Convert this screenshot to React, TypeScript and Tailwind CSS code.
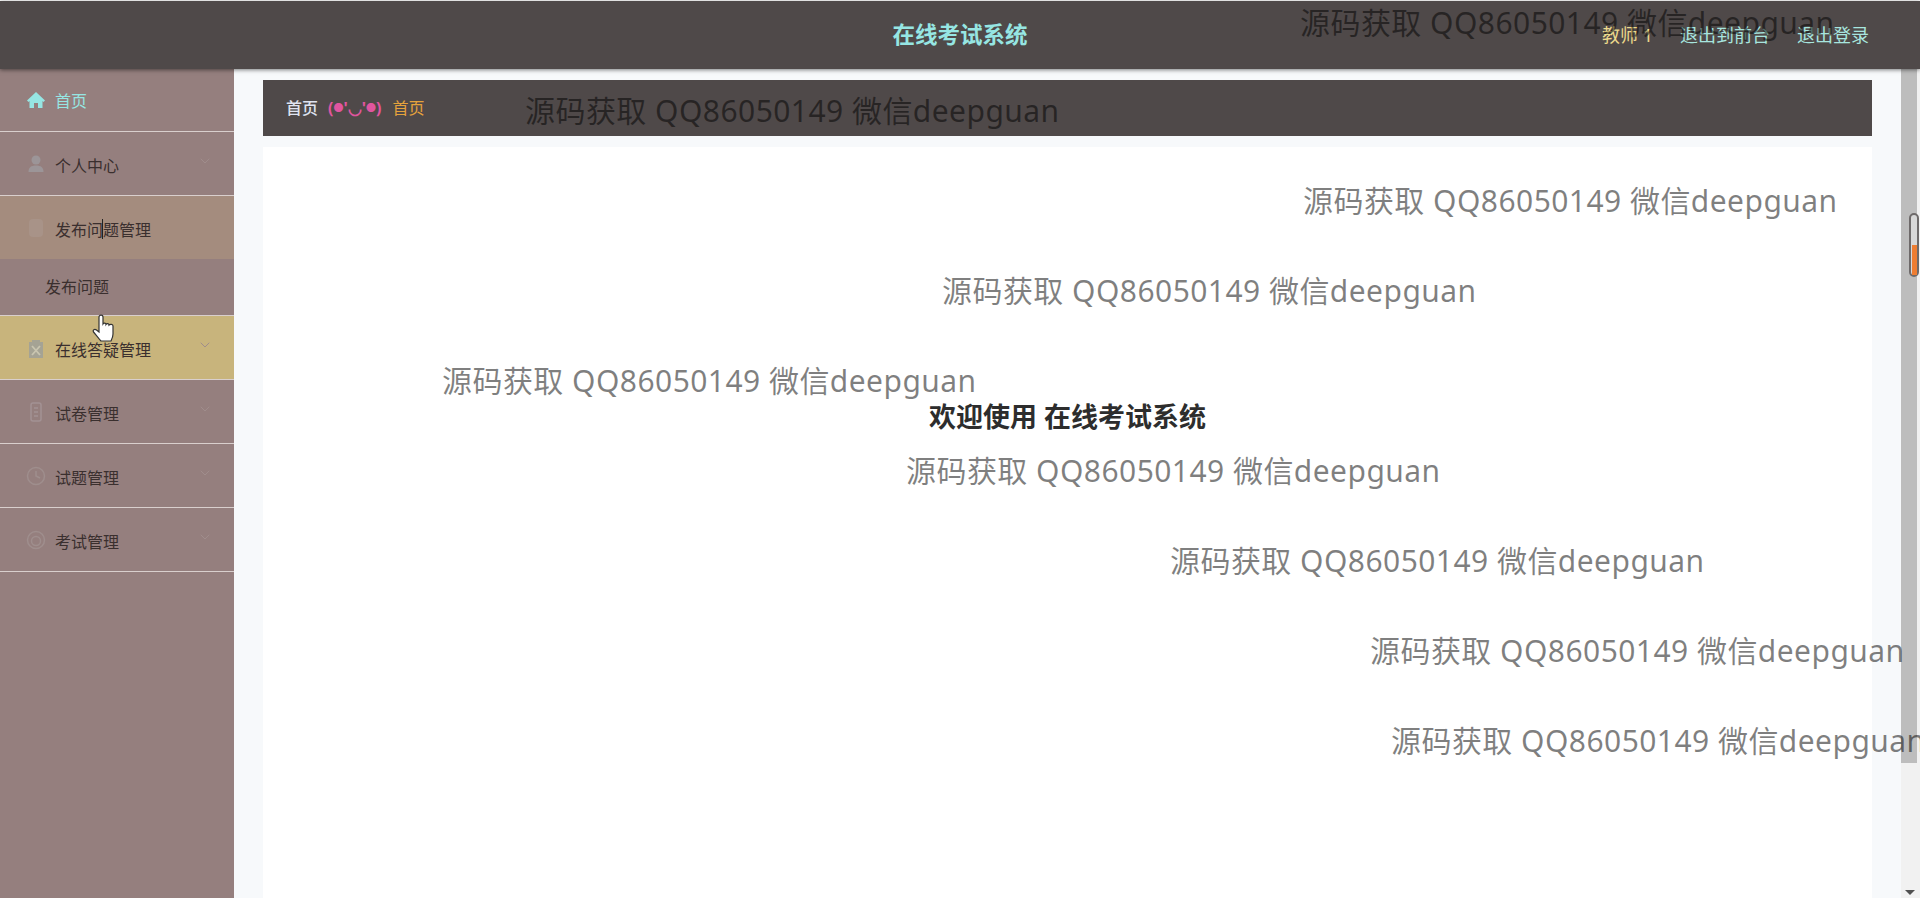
import { ChevronDown } from "lucide-react";

const font = "font-['Noto_Sans','Noto_Sans_CJK_SC',sans-serif]";

const marks = [
  { left: 1300, top: 3 },
  { left: 525, top: 91 },
  { left: 1303, top: 181 },
  { left: 942, top: 271 },
  { left: 442, top: 361 },
  { left: 906, top: 451 },
  { left: 1370, top: 631 },
  { left: 1391, top: 721 },
  { left: 1170, top: 541 },
];

const HomeIcon = () => (
  <svg viewBox="0 0 20 20" className="h-5 w-5 fill-[#96e6e3]">
    <path d="M10 2 1 10.500l1.500 1.500L3.500 11v7H8v-5h4v5h4.500v-7l1 1 1.500-1.500Z" />
  </svg>
);

const UserIcon = () => (
  <svg viewBox="0 0 20 20" className="h-5 w-5 fill-[#9c9598]">
    <circle cx="10" cy="6" r="4.500" />
    <path d="M2.500 18c0-4.500 2.500-6.500 7.500-6.500s7.500 2 7.500 6.500Z" />
  </svg>
);

const ClipboardIcon = () => (
  <svg viewBox="0 0 20 20" className="h-5 w-5">
    <path d="M3 4h3V2h8v2h3v16H3Z" fill="#a5a394" />
    <path d="m6 8 8 9m0-9-8 9" stroke="#c9c5b0" strokeWidth="1.800" />
  </svg>
);

const PhoneIcon = () => (
  <svg viewBox="0 0 20 20" className="h-5 w-5 fill-none stroke-[#a39294]" strokeWidth="1.500">
    <rect x="5" y="1" width="10" height="18" rx="2" />
    <path d="M8 6h4M8 10h4M8 14h4" />
  </svg>
);

const ClockIcon = () => (
  <svg viewBox="0 0 20 20" className="h-5 w-5 fill-none stroke-[#9f8e8d]" strokeWidth="1.500">
    <circle cx="10" cy="10" r="8.500" />
    <path d="M10 5v5l4 2" />
  </svg>
);

const RingIcon = () => (
  <svg viewBox="0 0 20 20" className="h-5 w-5 fill-none stroke-[#9f8e8d]" strokeWidth="1.500">
    <circle cx="10" cy="10" r="8.500" />
    <circle cx="10" cy="11" r="4.500" />
  </svg>
);

const Item = ({ label, icon, className = "" }: { label: string; icon?: React.ReactNode; className?: string }) => (
  <div className={`relative flex h-16 items-center border-b border-[#d9cfcd] pl-[21px] ${className}`}>
    <span className="flex w-[30px] justify-center">{icon}</span>
    <span className="ml-[4px] pt-[4px] text-base text-[#3a2f2e]">{label}</span>
    <ChevronDown className="absolute right-[21px] top-[21px] h-4 w-4 text-[#a08d8c]" strokeWidth={1.5} />
  </div>
);

export default function App() {
  return (
    <div className={`relative flex h-screen flex-col overflow-hidden ${font}`}>
      <header className="relative z-10 mt-px flex h-[68px] shrink-0 items-center bg-[#4f4949] shadow-[0_1px_4px_rgba(0,0,0,0.5)]">
        <div className="absolute inset-x-0 text-center text-[22.5px] font-bold text-[#96e6e3]">在线考试系统</div>
        <div className="ml-auto flex items-center pr-[51px] text-lg text-[#a7e5df]">
          <span className="mr-[27px] text-[#ecd98c]">教师 1</span>
          <span className="mr-[27px]">退出到前台</span>
          <span>退出登录</span>
        </div>
      </header>

      <div className="flex min-h-0 flex-1">
        <aside className="w-[234px] shrink-0 bg-[#957f7e]">
          <div className="flex h-[63px] items-center border-b border-[#d9cfcd] pl-[21px]">
            <span className="flex w-[30px] justify-center">
              <HomeIcon />
            </span>
            <span className="ml-[4px] pt-[2px] text-base text-[#96e6e3]">首页</span>
          </div>
          <Item label="个人中心" icon={<UserIcon />} />
          <div className="relative flex h-[63px] items-center bg-[#a48c7e] pl-[21px]">
            <span className="flex w-[30px] justify-center">
              <span className="h-[18px] w-[14px] rounded-sm bg-[#a89388]" />
            </span>
            <span className="ml-[4px] pt-[4px] text-base text-[#3a2f2e]">发布问题管理</span>
            <span className="absolute left-[102px] top-[23px] h-[20px] w-px bg-[#222]" />
          </div>
          <div className="flex h-[57px] items-center border-b border-[#d9cfcd] pl-[45px] text-base text-[#3a2f2e]">发布问题</div>
          <Item label="在线答疑管理" className="bg-[#c8b47c]" icon={<ClipboardIcon />} />
          <Item label="试卷管理" icon={<PhoneIcon />} />
          <Item label="试题管理" icon={<ClockIcon />} />
          <Item label="考试管理" icon={<RingIcon />} />
        </aside>

        <main className="flex min-w-0 flex-1 flex-col bg-[#f7f9fb] pl-[29px] pr-[29px] pt-[11px]">
          <div className="flex h-[56px] shrink-0 items-center bg-[#4f4949] pl-[23px] text-base">
            <span className="font-medium text-[#dfe3f0]">首页</span>
            <span className="ml-[10px] mr-[11px] flex items-center font-bold text-[#e0559f]">
              (<span className="text-[10px]">●</span>'◡'<span className="text-[10px]">●</span>)
            </span>
            <span className="text-[#e5a23c]">首页</span>
          </div>
          <div className="mt-[11px] flex flex-1 justify-center bg-white pt-[256px]">
            <h1 className="h-fit text-[27px] font-bold leading-none text-[#2d2d2d]">欢迎使用 在线考试系统</h1>
          </div>
        </main>

        {/* page scrollbar */}
        <div className="relative flex w-[19px] shrink-0 flex-col bg-[#f1f1f1]">
          <div className="h-[694px] w-[16px] bg-[#bdbdbd]" />
          <div className="absolute left-[8px] top-[144px] flex h-[64px] w-[10px] flex-col justify-end rounded-[5px] border-2 border-[#6e6a6a] bg-[#d8d8d8]">
            <div className="mx-auto h-[30px] w-[5px] bg-[#ee7d32]" />
          </div>
          <div className="absolute bottom-[3px] left-[4px] h-0 w-0 border-x-[5px] border-t-[5px] border-x-transparent border-t-[#505050]" />
        </div>
      </div>

      {/* watermark layer */}
      {marks.map((m) => (
        <div
          key={m.top}
          className="pointer-events-none absolute z-20 whitespace-nowrap text-[30px] leading-[40px] tracking-[0.45px] text-[#000000]/50"
          style={{ left: m.left, top: m.top }}
        >
          源码获取 QQ86050149 微信deepguan
        </div>
      ))}

      {/* mouse cursor */}
      <svg className="pointer-events-none absolute left-[92px] top-[314px] z-30 h-[30px] w-[24px]" viewBox="0 0 24 30">
        <path
          d="M7 3c0-2.500 4-2.500 4 0v7c1-1.500 3-1 3 .5 1-1.500 3-1 3 .5 1-1 4-1 4 1v8c0 3-1 5-2 7H9c-2-2-5-6-7.500-9-1-2 1-3.500 3-2l2.500 2Z"
          fill="#fff"
          stroke="#333"
          strokeWidth="1.200"
        />
      </svg>
    </div>
  );
}
